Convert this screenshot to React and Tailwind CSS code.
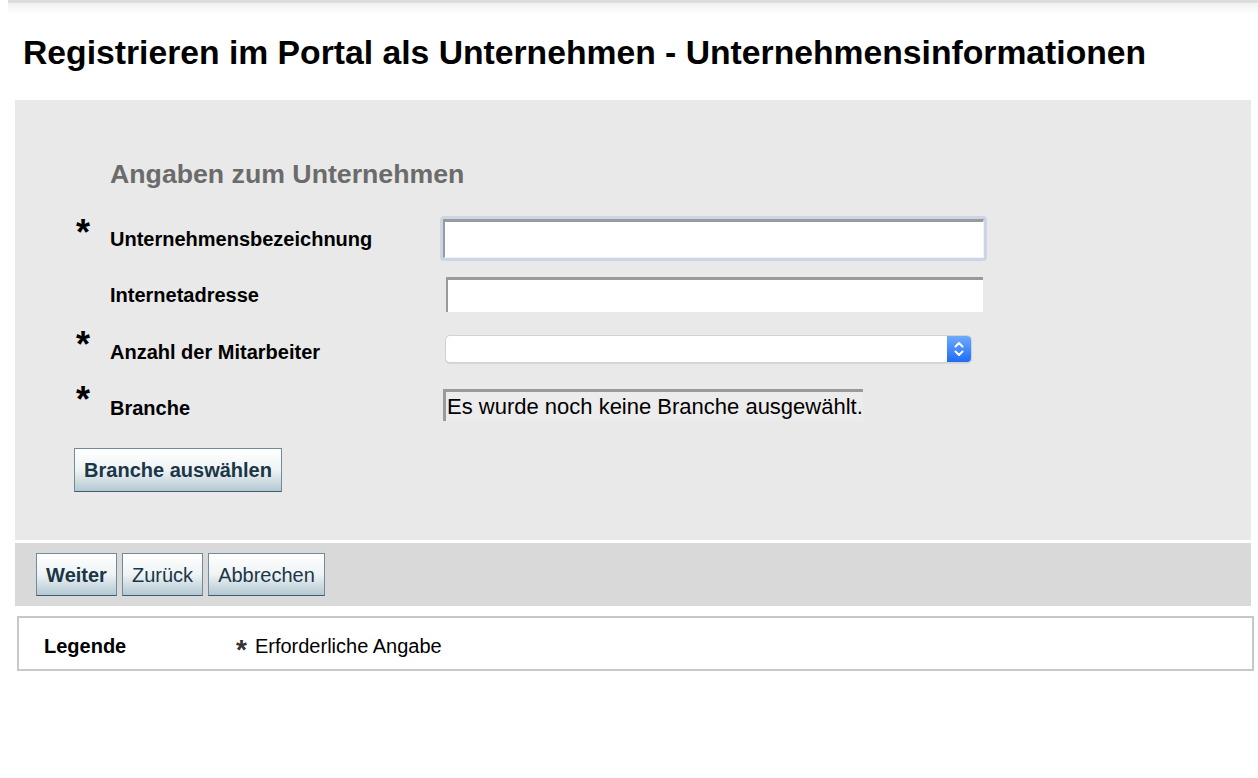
import React from "react";

function Btn({ children, bold, className = "" }) {
  return (
    <button
      className={
        "border border-[#6f8c9b] border-b-[#3d5d6e] bg-gradient-to-b from-white via-[#eef3f5] to-[#b4c8d2] text-[#1b3647] text-[20px] leading-none px-[9px] " +
        (bold ? "font-bold " : "") +
        className
      }
    >
      {children}
    </button>
  );
}

function Star() {
  return (
    <span className="mt-[2px] w-[36px] shrink-0 pl-[2px] text-[36px] font-bold leading-[30px] text-black">*</span>
  );
}

export default function App() {
  return (
    <div className="min-h-[778px] w-[1258px] bg-white font-['Liberation_Sans',Arial,sans-serif] text-black">
      <div className="ml-[8px] h-[3px] bg-[#dcdcdc]" />
      <div className="ml-[8px] h-[12px] bg-gradient-to-b from-[#f1f1f1] to-white" />
      <h1 className="ml-[23px] mt-[21px] text-[33.7px] font-bold leading-none">
        Registrieren im Portal als Unternehmen - Unternehmensinformationen
      </h1>

      <div className="ml-[15px] mr-[7px] mt-[30px] bg-[#e9e9e9] pl-[59px] pt-[61px] pb-[48px]">
        <h2 className="ml-[36px] text-[26.7px] font-bold leading-none text-[#6b6b6b]">
          Angaben zum Unternehmen
        </h2>

        <div className="mt-[29px] flex flex-col">
          {/* Row 1 */}
          <div className="flex h-[61px] items-start">
            <Star />
            <div className="mt-[13px] w-[330px] text-[20px] font-bold leading-[20px]">Unternehmensbezeichnung</div>
            <div className="rounded-[4px] bg-[#c9d6e6] p-[3px]">
              <div className="h-[39px] w-[541px] border-t-[3px] border-l-[2px] border-t-[#9a9a9a] border-l-[#9a9a9a] border-r border-b border-r-[#f2f2f2] border-b-[#f2f2f2] bg-white" />
            </div>
          </div>
          {/* Row 2 */}
          <div className="flex h-[51px] items-start">
            <span className="w-[36px] shrink-0" />
            <div className="mt-[8px] w-[330px] text-[20px] font-bold leading-[20px]">Internetadresse</div>
            <div className="ml-[6px] h-[35px] w-[537px] border-t-[3px] border-l-[2px] border-t-[#9a9a9a] border-l-[#9a9a9a] bg-white" />
          </div>
          {/* Row 3 */}
          <div className="flex h-[55px] items-start">
            <Star />
            <div className="mt-[14px] w-[330px] text-[20px] font-bold leading-[20px]">Anzahl der Mitarbeiter</div>
            <div className="ml-[5px] mt-[7px] flex h-[28px] w-[527px] overflow-hidden rounded-[5px] border border-[#d2d2d2] bg-white shadow-[0_1px_1px_rgba(0,0,0,0.08)]">
              <div className="flex-1" />
              <div className="flex w-[24px] items-center justify-center bg-gradient-to-b from-[#6ea9ff] to-[#1c6cf6]">
                <svg width="12" height="18" viewBox="0 0 12 18" fill="none" stroke="white" strokeWidth="2" strokeLinecap="round" strokeLinejoin="round">
                  <path d="M2.5 6.5 L6 3 L9.5 6.5" />
                  <path d="M2.5 11.5 L6 15 L9.5 11.5" />
                </svg>
              </div>
            </div>
          </div>
          {/* Row 4 */}
          <div className="flex h-[38px] items-start">
            <Star />
            <div className="mt-[15px] w-[330px] text-[20px] font-bold leading-[20px]">Branche</div>
            <div className="ml-[3px] mt-[6px] flex h-[32px] w-[420px] items-center border-t-[3px] border-l-[3px] border-t-[#9a9a9a] border-l-[#9a9a9a] bg-[#ececec] pl-[1px] text-[22px] leading-none">
              Es wurde noch keine Branche ausgewählt.
            </div>
          </div>
        </div>

        <Btn bold className="mt-[27px] h-[44px] w-[208px]">Branche auswählen</Btn>
      </div>

      <div className="ml-[15px] mr-[7px] mt-[3px] flex h-[63px] items-start gap-[5px] bg-[#d9d9d9] pl-[21px] pt-[10px]">
        <Btn bold className="h-[43px] w-[81px]">Weiter</Btn>
        <Btn className="h-[43px] w-[81px]">Zurück</Btn>
        <Btn className="h-[43px] w-[117px]">Abbrechen</Btn>
      </div>

      <div className="ml-[17px] mr-[4px] mt-[10px] flex h-[55px] items-center border-2 border-[#c8c8c8] pl-[25px] pt-[5px]">
        <div className="w-[192px] text-[20px] font-bold leading-none">Legende</div>
        <span className="mr-[8px] translate-y-[4px] text-[28px] font-bold leading-none text-[#333]">*</span>
        <span className="text-[20px] leading-none">Erforderliche Angabe</span>
      </div>
    </div>
  );
}
